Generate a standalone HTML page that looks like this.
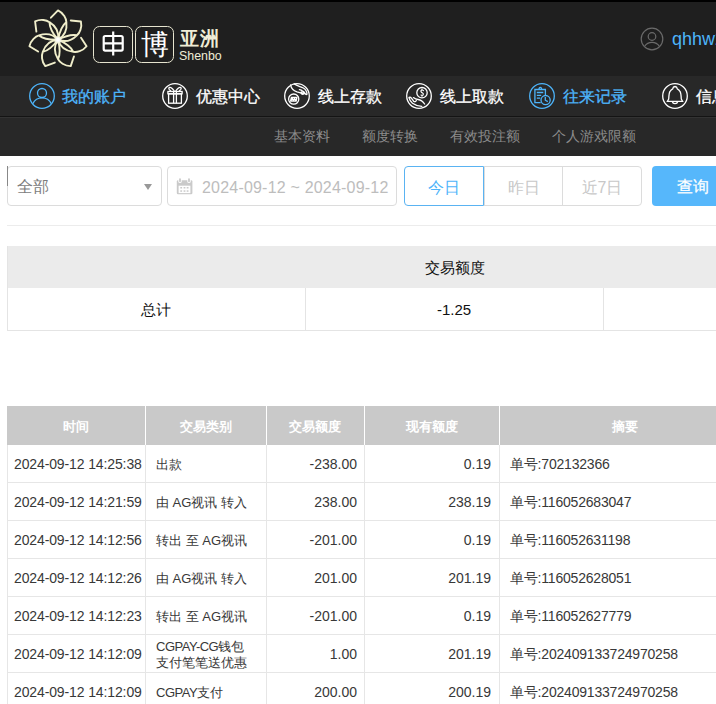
<!DOCTYPE html>
<html><head><meta charset="utf-8">
<style>
*{margin:0;padding:0;box-sizing:border-box}
html,body{width:716px;height:704px;overflow:hidden;background:#fff;font-family:"Liberation Sans",sans-serif}
.abs{position:absolute}
#hdr{position:absolute;left:0;top:0;width:716px;height:76px;background:#1f1f1f;border-top:2px solid #000}
#nav{position:absolute;left:0;top:76px;width:716px;height:40px;background:#282828}
#navline{position:absolute;left:0;top:116px;width:716px;height:1px;background:#141414}
#sub{position:absolute;left:0;top:117px;width:716px;height:39px;background:#282828;border-top:1px solid #333}
.ni{position:absolute;top:80px;width:32px;height:32px}
.nt{position:absolute;top:86px;font-size:16px;line-height:22px;color:#fff;white-space:nowrap;-webkit-text-stroke:0.3px currentColor}
.blue{color:#4db4fa}
.st{position:absolute;top:126px;font-size:14px;line-height:20px;color:#8c8c8c;white-space:nowrap}
.box{position:absolute;border:1px solid #dcdcdc;border-radius:4px;background:#fff}
.tab{position:absolute;top:166px;height:40px;font-size:16px;line-height:40px;text-align:center;color:#c8c8c8;border:1px solid #dcdcdc}
.th{position:absolute;top:408px;height:37px;line-height:37px;text-align:center;color:#fff;font-size:13px;font-weight:bold;white-space:nowrap}
.vl{top:445px;width:1px;height:259px;background:#e6e6e6}
.hl{left:7px;width:709px;height:1px;background:#e6e6e6}
.td{position:absolute;height:37px;line-height:37px;font-size:14px;color:#383838;white-space:nowrap}
.td.r{text-align:right}
.dt{left:14px;letter-spacing:-0.12px}
.sm{letter-spacing:-0.2px}
.c2{font-size:13px;letter-spacing:0}
.c2 s{text-decoration:none;letter-spacing:-0.5px}
</style></head><body>
<div id="hdr"></div>
<!-- logo -->
<svg class="abs" style="left:18px;top:0px" width="80" height="80" viewBox="0 0 80 80"><g transform="translate(40,39.7)"><g fill="none" stroke="#f0eecb" stroke-width="1.9" stroke-linecap="round" stroke-linejoin="round"><path transform="rotate(0.00)" d="M0,0 Q9.8,-5.6 8.4,-17.6 Q2.6,-13 0,0 M8.4,-17.6 C8.2,-21 5.8,-26.5 0,-29.3 L-7.1,-22"/><path transform="rotate(51.43)" d="M0,0 Q9.8,-5.6 8.4,-17.6 Q2.6,-13 0,0 M8.4,-17.6 C8.2,-21 5.8,-26.5 0,-29.3 L-7.1,-22"/><path transform="rotate(102.86)" d="M0,0 Q9.8,-5.6 8.4,-17.6 Q2.6,-13 0,0 M8.4,-17.6 C8.2,-21 5.8,-26.5 0,-29.3 L-7.1,-22"/><path transform="rotate(154.29)" d="M0,0 Q9.8,-5.6 8.4,-17.6 Q2.6,-13 0,0 M8.4,-17.6 C8.2,-21 5.8,-26.5 0,-29.3 L-7.1,-22"/><path transform="rotate(205.71)" d="M0,0 Q9.8,-5.6 8.4,-17.6 Q2.6,-13 0,0 M8.4,-17.6 C8.2,-21 5.8,-26.5 0,-29.3 L-7.1,-22"/><path transform="rotate(257.14)" d="M0,0 Q9.8,-5.6 8.4,-17.6 Q2.6,-13 0,0 M8.4,-17.6 C8.2,-21 5.8,-26.5 0,-29.3 L-7.1,-22"/><path transform="rotate(308.57)" d="M0,0 Q9.8,-5.6 8.4,-17.6 Q2.6,-13 0,0 M8.4,-17.6 C8.2,-21 5.8,-26.5 0,-29.3 L-7.1,-22"/></g><circle r="4" fill="#f2f1e0" opacity="0.45"/><circle r="2.8" fill="#f6f6f2" opacity="0.8"/><circle r="1.8" fill="#fff"/></g></svg>
<div class="abs" style="left:93px;top:26px;width:40px;height:37px;border:1.7px solid #e6e4cf;border-radius:6.5px"></div>
<svg class="abs" style="left:93px;top:26px" width="40" height="37" viewBox="0 0 40 37"><g fill="none" stroke="#fff" stroke-width="2.2" stroke-linejoin="round"><rect x="10.7" y="10.0" width="19" height="14.6" rx="1.5"/><path d="M10.7,17.3 H29.7 M20.2,5.5 V29.4"/></g></svg>
<div class="abs" style="left:134.5px;top:26px;width:39.5px;height:37px;border:1.7px solid #e6e4cf;border-radius:6.5px"></div>
<div class="abs" style="left:135.5px;top:27px;width:39.5px;font-size:27.5px;line-height:36px;text-align:center;color:#fff">博</div>
<div class="abs" style="left:179.5px;top:27.7px;font-size:19px;line-height:22px;color:#efedd6;letter-spacing:1px;white-space:nowrap;font-weight:bold">亚洲</div>
<div class="abs" style="left:179px;top:48.8px;font-size:12.4px;line-height:14px;color:#efedd6;white-space:nowrap">Shenbo</div>
<svg class="abs" style="left:640px;top:27px" width="24" height="24" viewBox="0 0 24 24"><g fill="none" stroke="#6a6a6a" stroke-width="1.2"><circle cx="12" cy="12" r="10.8"/><circle cx="12" cy="9.5" r="3.8"/><path d="M4.5,19.5 A9,9 0 0 1 19.5,19.5"/></g></svg>
<div class="abs" style="left:672px;top:27.8px;font-size:18px;line-height:22px;color:#4db4fa;white-space:nowrap">qhhw2</div>

<div id="nav"></div><div id="navline"></div><div id="sub"></div>
<!-- nav icons -->
<svg class="ni" style="left:26px" viewBox="0 0 32 32"><g fill="none" stroke="#4db4fa" stroke-width="1.3"><circle cx="16" cy="16" r="12.3"/><circle cx="16" cy="13" r="4.5"/><path d="M6.8,23.6 A10.3,10.3 0 0 1 25.3,23.6"/></g></svg>
<div class="nt blue" style="left:62px">我的账户</div>
<svg class="ni" style="left:159px" viewBox="0 0 32 32"><g fill="none" stroke="#fff" stroke-width="1.3"><circle cx="16" cy="16" r="12.3"/><rect x="8.9" y="11.5" width="14.2" height="2.3"/><rect x="9.6" y="13.8" width="12.8" height="9.4"/><path d="M14.6,11.5 V23.2 M17.4,11.5 V23.2 M15.4,11.3 Q12.5,7 10.6,7.4 Q9.2,8 10.4,9.6 L12,11.3 M16.6,11.3 Q19.5,7 21.4,7.4 Q22.8,8 21.6,9.6 L20,11.3"/></g></svg>
<div class="nt" style="left:196px">优惠中心</div>
<svg class="ni" style="left:281px" viewBox="0 0 32 32"><g fill="none" stroke="#fff" stroke-width="1.3" stroke-linejoin="round" stroke-linecap="round"><circle cx="16" cy="16" r="12.3"/><circle cx="12.7" cy="19.1" r="5.1"/><path d="M10.3,17.4 H16 L15.3,21.1 H9.5 Z M10,21 L11.2,17.8 L12.3,21 L13.4,17.8 L14.5,21 L15.6,17.8" stroke-width="1.1"/><path d="M9.6,4.8 C10.2,8.5 12.5,10.6 16,11.8 L19.6,12.9 Q20.8,13.6 21.3,14.4 M13.2,3.9 C16,5.8 19.5,6.6 22.3,8 C24.8,9.5 26,12 26,14.3 Q25.2,14.8 24.5,14 L22.5,11.5 M18.4,9.6 Q20.5,9.8 21.6,11.2 L23,13.6 Q22.5,14.6 21.5,13.8 L20.2,12"/></g></svg>
<div class="nt" style="left:318px">线上存款</div>
<svg class="ni" style="left:403px" viewBox="0 0 32 32"><g fill="none" stroke="#fff" stroke-width="1.3" stroke-linejoin="round" stroke-linecap="round"><circle cx="16" cy="16" r="12.3"/><circle cx="19" cy="12.7" r="5.2"/><path d="M20.5,10.6 Q19.6,9.8 18.6,10.1 Q17.6,10.6 18,11.7 Q18.6,12.6 19.6,13 Q20.6,13.6 20.2,14.8 Q19.4,15.6 18,15 M19,9.2 V9.9 M19,15.4 V16.2" stroke-width="1.2"/><path d="M5.9,17.6 Q6.8,21 9.5,23.2 Q13,25.8 18.8,26.4 M10.4,17.6 Q12.5,19.3 15,19.5 Q19,20 21.6,24 M6.2,17.4 Q7.4,16.8 8.6,18.4 L10.6,21.2 Q11.6,22 12.6,21.4 L13.4,20.6"/></g></svg>
<div class="nt" style="left:440px">线上取款</div>
<svg class="ni" style="left:526px" viewBox="0 0 32 32"><g fill="none" stroke="#4db4fa" stroke-width="1.3"><circle cx="16" cy="16" r="12.3"/><path d="M14.7,22.7 H8.9 V9.5 H19.4 V15.2"/><path d="M13,9.5 Q13,7.3 14.3,7.3 Q15.6,7.3 15.6,9.5"/><path d="M10.8,12.5 H17.3 M10.8,15.4 H15.2 M10.8,18.2 H14.2"/><circle cx="19.6" cy="20.1" r="4.6"/><path d="M19.3,17 V20.2 L21.8,21.6"/></g></svg>
<div class="nt blue" style="left:563px">往来记录</div>
<svg class="ni" style="left:659px" viewBox="0 0 32 32"><g fill="none" stroke="#fff" stroke-width="1.3"><circle cx="16" cy="16" r="12.3"/><path d="M8.4,21.3 H23.6 L22.3,19 Q22,12.8 21,11.5 Q20,9.6 18.3,8.8 Q18,6.6 16,6.5 Q14,6.6 13.7,8.8 Q12,9.6 11,11.5 Q10,12.8 9.7,19 Z"/><path d="M13.2,21.5 A2.9,2.9 0 0 0 18.8,21.5"/></g></svg>
<div class="nt" style="left:696px">信息中心</div>
<!-- sub nav -->
<div class="st" style="left:274px">基本资料</div>
<div class="st" style="left:362px">额度转换</div>
<div class="st" style="left:450px">有效投注额</div>
<div class="st" style="left:552px">个人游戏限额</div>

<!-- filters -->
<div class="box" style="left:7px;top:166px;width:155px;height:40px"></div>
<div class="abs" style="left:7px;top:166px;width:1px;height:20px;background:#888"></div>
<div class="abs" style="left:17px;top:177px;font-size:15.5px;line-height:20px;color:#7c7c7c">全部</div>
<div class="abs" style="left:143.5px;top:184px;width:0;height:0;border-left:4.5px solid transparent;border-right:4.5px solid transparent;border-top:6px solid #999"></div>
<div class="box" style="left:167px;top:166px;width:230px;height:40px"></div>
<svg class="abs" style="left:176px;top:177px" width="18" height="19" viewBox="0 0 18 19"><rect x="0.8" y="3.3" width="15.6" height="14" rx="1.3" fill="#cacaca"/><rect x="2.6" y="8.7" width="11.8" height="7.4" fill="#fff"/><rect x="2.3" y="0.4" width="3.4" height="5.6" rx="1.5" fill="#fff"/><rect x="11.3" y="0.4" width="3.4" height="5.6" rx="1.5" fill="#fff"/><rect x="3.1" y="1.2" width="1.8" height="4" rx="0.9" fill="#cacaca"/><rect x="12.1" y="1.2" width="1.8" height="4" rx="0.9" fill="#cacaca"/><g fill="#cacaca"><rect x="4.3" y="10" width="1.8" height="1.5"/><rect x="7.6" y="10" width="1.8" height="1.5"/><rect x="10.7" y="10" width="1.8" height="1.5"/><rect x="4.3" y="13.3" width="1.8" height="1.5"/><rect x="7.6" y="13.3" width="1.8" height="1.5"/><rect x="10.7" y="13.3" width="1.8" height="1.5"/></g></svg>
<div class="abs" style="left:202px;top:176.5px;font-size:16px;line-height:22px;color:#bdbdbd;white-space:nowrap;letter-spacing:0.2px">2024-09-12 ~ 2024-09-12</div>
<div class="tab" style="left:484px;width:79px;line-height:41px">昨日</div>
<div class="tab" style="left:562px;width:80px;border-radius:0 4px 4px 0;line-height:41px">近7日</div>
<div class="tab" style="left:404px;width:80px;border-color:#5ab3f2;color:#4db4fa;border-radius:4px 0 0 4px;line-height:41px">今日</div>
<div class="abs" style="left:652px;top:166px;width:82px;height:40px;background:#56b7fb;border-radius:4px;color:#fff;font-size:16px;line-height:41px;text-align:center;-webkit-text-stroke:0.25px #fff">查询</div>
<div class="abs" style="left:7px;top:225px;width:709px;height:1px;background:#ececec"></div>

<!-- summary -->
<div class="abs" style="left:7px;top:246px;width:709px;height:42px;background:#ebebeb"></div>
<div class="abs" style="left:7px;top:246px;width:1px;height:85px;background:#e4e4e4"></div>
<div class="abs" style="left:305px;top:288px;width:1px;height:42px;background:#e4e4e4"></div>
<div class="abs" style="left:603px;top:288px;width:1px;height:42px;background:#e4e4e4"></div>
<div class="abs" style="left:7px;top:330px;width:709px;height:1px;background:#e4e4e4"></div>
<div class="abs" style="left:7px;top:258px;width:896px;text-align:center;font-size:15px;line-height:20px;color:#111">交易额度</div>
<div class="abs" style="left:7px;top:300px;width:298px;text-align:center;font-size:15px;line-height:20px;color:#111">总计</div>
<div class="abs" style="left:305px;top:299.5px;width:298px;text-align:center;font-size:15px;line-height:20px;color:#111">-1.25</div>

<!-- main table -->
<div class="abs" style="left:7px;top:406px;width:744px;height:39px;background:#c9c9c9"></div>
<div class="th" style="left:7px;width:138px">时间</div>
<div class="th" style="left:145px;width:121px">交易类别</div>
<div class="th" style="left:266px;width:98px">交易额度</div>
<div class="th" style="left:364px;width:135px">现有额度</div>
<div class="th" style="left:499px;width:252px">摘要</div>
<div class="abs" style="left:145px;top:406px;width:1px;height:39px;background:#fff"></div>
<div class="abs" style="left:266px;top:406px;width:1px;height:39px;background:#fff"></div>
<div class="abs" style="left:364px;top:406px;width:1px;height:39px;background:#fff"></div>
<div class="abs" style="left:499px;top:406px;width:1px;height:39px;background:#fff"></div>
<div class="abs vl" style="left:7px"></div>
<div class="abs vl" style="left:145px"></div>
<div class="abs vl" style="left:266px"></div>
<div class="abs vl" style="left:364px"></div>
<div class="abs vl" style="left:499px"></div>
<div class="abs hl" style="top:482px"></div>
<div class="abs hl" style="top:520px"></div>
<div class="abs hl" style="top:558px"></div>
<div class="abs hl" style="top:596px"></div>
<div class="abs hl" style="top:634px"></div>
<div class="abs hl" style="top:672px"></div>
<div class="td dt" style="top:446px">2024-09-12 14:25:38</div>
<div class="td c2" style="top:446px;left:156px">出款</div>
<div class="td r" style="top:446px;left:266px;width:91px">-238.00</div>
<div class="td r" style="top:446px;left:364px;width:127px">0.19</div>
<div class="td sm" style="top:446px;left:510px">单号:702132366</div>
<div class="td dt" style="top:484px">2024-09-12 14:21:59</div>
<div class="td c2" style="top:484px;left:156px">由 AG视讯 转入</div>
<div class="td r" style="top:484px;left:266px;width:91px">238.00</div>
<div class="td r" style="top:484px;left:364px;width:127px">238.19</div>
<div class="td sm" style="top:484px;left:510px">单号:116052683047</div>
<div class="td dt" style="top:522px">2024-09-12 14:12:56</div>
<div class="td c2" style="top:522px;left:156px">转出 至 AG视讯</div>
<div class="td r" style="top:522px;left:266px;width:91px">-201.00</div>
<div class="td r" style="top:522px;left:364px;width:127px">0.19</div>
<div class="td sm" style="top:522px;left:510px">单号:116052631198</div>
<div class="td dt" style="top:560px">2024-09-12 14:12:26</div>
<div class="td c2" style="top:560px;left:156px">由 AG视讯 转入</div>
<div class="td r" style="top:560px;left:266px;width:91px">201.00</div>
<div class="td r" style="top:560px;left:364px;width:127px">201.19</div>
<div class="td sm" style="top:560px;left:510px">单号:116052628051</div>
<div class="td dt" style="top:598px">2024-09-12 14:12:23</div>
<div class="td c2" style="top:598px;left:156px">转出 至 AG视讯</div>
<div class="td r" style="top:598px;left:266px;width:91px">-201.00</div>
<div class="td r" style="top:598px;left:364px;width:127px">0.19</div>
<div class="td sm" style="top:598px;left:510px">单号:116052627779</div>
<div class="td dt" style="top:636px">2024-09-12 14:12:09</div>
<div class="td c2" style="top:639px;left:156px;line-height:16px"><s>CGPAY-CG</s>钱包<br>支付笔笔送优惠</div>
<div class="td r" style="top:636px;left:266px;width:91px">1.00</div>
<div class="td r" style="top:636px;left:364px;width:127px">201.19</div>
<div class="td sm" style="top:636px;left:510px">单号:202409133724970258</div>
<div class="td dt" style="top:674px">2024-09-12 14:12:09</div>
<div class="td c2" style="top:674px;left:156px"><s>CGPAY</s>支付</div>
<div class="td r" style="top:674px;left:266px;width:91px">200.00</div>
<div class="td r" style="top:674px;left:364px;width:127px">200.19</div>
<div class="td sm" style="top:674px;left:510px">单号:202409133724970258</div>
</body></html>
